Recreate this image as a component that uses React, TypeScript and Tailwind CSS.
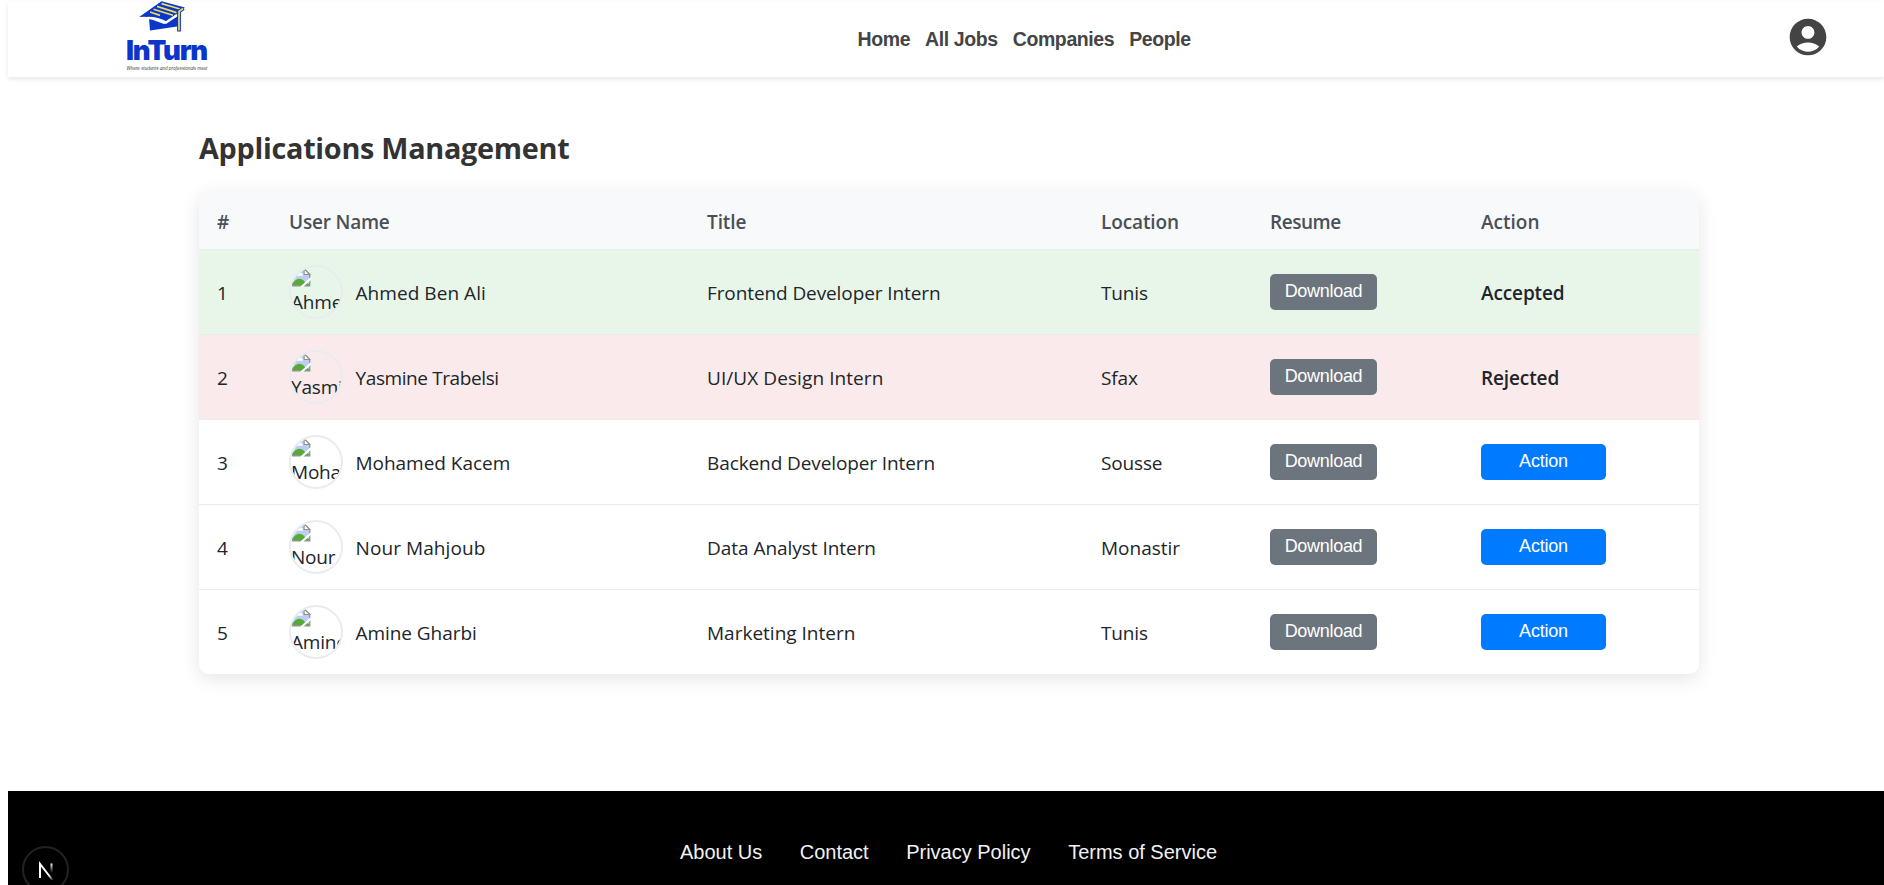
import { MdAccountCircle } from "react-icons/md";

type Status = "accepted" | "rejected" | "pending";

interface Application {
  id: number;
  name: string;
  nameSpacing: string;
  title: string;
  titleSpacing: string;
  location: string;
  locationSpacing: string;
  status: Status;
}

const applications: Application[] = [
  { id: 1, name: "Ahmed Ben Ali", nameSpacing: "tracking-[0.06px]", title: "Frontend Developer Intern", titleSpacing: "tracking-[-0.1px]", location: "Tunis", locationSpacing: "tracking-[-0.15px]", status: "accepted" },
  { id: 2, name: "Yasmine Trabelsi", nameSpacing: "tracking-[-0.4px]", title: "UI/UX Design Intern", titleSpacing: "tracking-[0.08px]", location: "Sfax", locationSpacing: "tracking-[-0.15px]", status: "rejected" },
  { id: 3, name: "Mohamed Kacem", nameSpacing: "tracking-[-0.03px]", title: "Backend Developer Intern", titleSpacing: "tracking-[-0.1px]", location: "Sousse", locationSpacing: "tracking-[-0.15px]", status: "pending" },
  { id: 4, name: "Nour Mahjoub", nameSpacing: "tracking-[0.08px]", title: "Data Analyst Intern", titleSpacing: "tracking-[-0.04px]", location: "Monastir", locationSpacing: "tracking-[0px]", status: "pending" },
  { id: 5, name: "Amine Gharbi", nameSpacing: "tracking-[-0.05px]", title: "Marketing Intern", titleSpacing: "tracking-[0px]", location: "Tunis", locationSpacing: "tracking-[-0.15px]", status: "pending" },
];

const rowColors: Record<Status, string> = {
  accepted: "bg-[#e8f5e9]",
  rejected: "bg-[#faeaeb]",
  pending: "bg-white",
};

const columns = "grid grid-cols-[72px_418px_394px_169px_211px_236px] items-center pl-[18px]";

function Logo() {
  return (
    <div className="flex w-[82px] flex-col items-center font-['Inter',sans-serif]">
      <svg width="48" height="31" viewBox="0 0 48 31" className="mr-[11px] shrink-0">
        <path d="M11 17.5 L26 23 L42 14 L42.5 25 L12 29.5Z" fill="#0a36cc" />
        <path d="M1.2 16 L23.5 0.3 L46.8 6.6 L29 22 Q17 14.5 1.2 16Z" fill="#0a36cc" />
        <path d="M9.5 17 Q20 16.8 28 21.6 L39 14" fill="none" stroke="#fff" strokeWidth="2.4" />
        <path d="M23.5 2.6 L42 8 M19 5.4 L38.5 11.6 M15.5 8.3 L35 14.2 M12 11 L22 14.4" stroke="#ecdc59" strokeWidth="1.7" fill="none" />
        <path d="M45.5 7.2 L41 10.5 V30.5" stroke="#0a36cc" strokeWidth="3.8" fill="none" />
        <path d="M45 7.5 L41 10.5 V29.5" stroke="#ecdc59" strokeWidth="1.7" fill="none" />
      </svg>
      <span className="mt-[4px] mr-px text-[27.5px] leading-[28px] font-black tracking-[-1.25px] text-[#0a36cc]">InTurn</span>
      <span className="mt-[2px] text-[4.3px] leading-[6px] whitespace-nowrap text-[#333] italic">Where students and professionals meet</span>
    </div>
  );
}

function BrokenImage() {
  return (
    <svg width="20" height="20" viewBox="0 0 16 16" className="block">
      <path d="M1 1.5 H10.5 L15 6 V15 H1Z" fill="#bccff3" />
      <path d="M4.6 7 Q4.4 5.6 5.8 5.4 Q6.6 3.8 8 4.8 Q9.8 5 9.4 7Z" fill="#fff" />
      <path d="M1 15 V13.2 Q3.6 9.4 7 9.4 Q9.8 9.6 11.2 12 L15 14 V15Z" fill="#58aa36" />
      <path d="M1 15 V1.5 H10.5 L15 6 V15 H1" fill="none" stroke="#8f8f8f" strokeWidth="1" />
      <path d="M10.5 1.5 V6 H15Z" fill="#fff" stroke="#8f8f8f" strokeWidth="0.9" />
      <path d="M8 16.4 L16 9" stroke="#fff" strokeWidth="1.8" />
    </svg>
  );
}

function Avatar({ name }: { name: string }) {
  return (
    <div className="h-[54px] w-[54px] shrink-0 overflow-hidden rounded-full border-2 border-[#e9ecef]">
      <BrokenImage />
      <div className="mt-[2px] w-[50px] overflow-hidden leading-[26px] tracking-[-0.2px] whitespace-nowrap">{name}</div>
    </div>
  );
}

function Row({ app }: { app: Application }) {
  return (
    <div className={`${columns} h-[85px] border-t border-[#e9ecef] ${rowColors[app.status]}`}>
      <span className="pt-[2px]">{app.id}</span>
      <div className="flex items-center gap-[12.5px]">
        <Avatar name={app.name} />
        <span className={`pt-[2px] ${app.nameSpacing}`}>{app.name}</span>
      </div>
      <span className={`pt-[2px] ${app.titleSpacing}`}>{app.title}</span>
      <span className={`pt-[2px] ${app.locationSpacing}`}>{app.location}</span>
      <button className="flex h-9 w-[107px] justify-center rounded-[5px] bg-[#6c757d] pt-[4px] font-['Liberation_Sans',Arial,sans-serif] text-[18px] leading-[26px] tracking-[-0.3px] text-white">
        Download
      </button>
      {app.status === "pending" ? (
        <button className="flex h-9 w-[125px] justify-center rounded-[5px] bg-[#007bff] pt-[4px] font-['Liberation_Sans',Arial,sans-serif] text-[18px] leading-[26px] tracking-[-0.2px] text-white">
          Action
        </button>
      ) : (
        <span className="pt-[2px] font-semibold tracking-[-0.12px]">{app.status === "accepted" ? "Accepted" : "Rejected"}</span>
      )}
    </div>
  );
}

export default function App() {
  return (
    <div className="relative flex h-[885px] flex-col overflow-hidden bg-white pt-[2px] pl-2 font-['Liberation_Sans',Arial,sans-serif]">
      <header className="flex h-[75px] shrink-0 bg-white pl-[118px] shadow-[0_2px_5px_rgba(0,0,0,0.1)]">
        <div className="-mt-px">
          <Logo />
        </div>
        <nav className="ml-[649.5px] flex w-[340px] gap-[15px] pt-[23px] text-[19.5px] leading-[28px] font-bold tracking-[-0.4px] whitespace-nowrap text-[#444]">
          <a>Home</a>
          <a>All Jobs</a>
          <a>Companies</a>
          <a>People</a>
        </nav>
        <MdAccountCircle className="mt-[13px] mr-[54px] ml-auto h-[44px] w-[44px] text-[#444]" />
      </header>

      <main className="ml-[191px] w-[1500px] grow pt-[51px] font-['Open_Sans','Noto_Sans',sans-serif] text-[19px] leading-[28px] text-[#212529]">
        <h1 className="h-[63px] text-[28.8px] leading-[40px] font-bold tracking-[-0.28px] text-[#333]">Applications Management</h1>
        <section className="overflow-hidden rounded-[10px] bg-white shadow-[0_5px_19px_rgba(0,0,0,0.1)]">
          <div className={`${columns} h-[58px] bg-[#f8f9fb] pt-[4px] font-semibold text-[#495057]`}>
            <span>#</span>
            <span className="tracking-[-0.2px]">User Name</span>
            <span className="tracking-[-0.1px]">Title</span>
            <span className="tracking-[-0.11px]">Location</span>
            <span className="tracking-[-0.45px]">Resume</span>
            <span className="tracking-[0px]">Action</span>
          </div>
          {applications.map((app) => (
            <Row key={app.id} app={app} />
          ))}
        </section>
      </main>

      <footer className="flex h-[94px] shrink-0 justify-center gap-[37.5px] bg-black pt-[47px] pl-[5px] text-[20px] leading-[28px] text-[#f2f2f2]">
        <a>About Us</a>
        <a>Contact</a>
        <a>Privacy Policy</a>
        <a>Terms of Service</a>
      </footer>

      <div className="absolute top-[846px] left-[22px] flex h-[47px] w-[47px] items-center justify-center rounded-full border-2 border-[#222] bg-black">
        <svg width="18" height="20" viewBox="0 0 18 20" fill="none" className="mt-[2px]">
          <defs>
            <linearGradient id="diagonal" x1="8" y1="10" x2="16" y2="19" gradientUnits="userSpaceOnUse">
              <stop offset="0.5" stopColor="#fff" />
              <stop offset="1" stopColor="#fff" stopOpacity="0.1" />
            </linearGradient>
            <linearGradient id="stem" x1="14" y1="2" x2="14" y2="12" gradientUnits="userSpaceOnUse">
              <stop stopColor="#fff" />
              <stop offset="1" stopColor="#fff" stopOpacity="0" />
            </linearGradient>
          </defs>
          <path d="M3 17 V3 L15.5 19" stroke="url(#diagonal)" strokeWidth="2" />
          <rect x="13.5" y="2.5" width="2" height="10" fill="url(#stem)" />
        </svg>
      </div>
    </div>
  );
}
